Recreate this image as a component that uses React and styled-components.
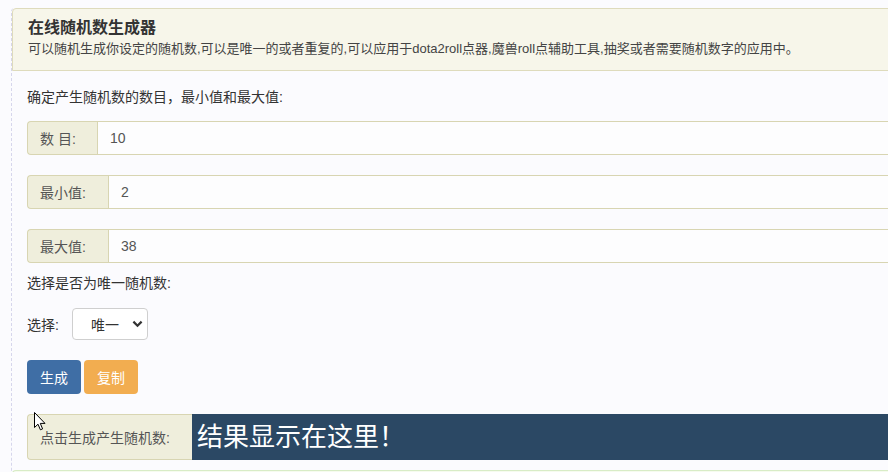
import React from "react";
import styled, { createGlobalStyle } from "styled-components";

const Global = createGlobalStyle`
  html, body {
    margin: 0;
    padding: 0;
    background: #fbfbfe;
    overflow: hidden;
  }
  body {
    font-family: "Liberation Sans", "Noto Sans CJK SC", sans-serif;
    color: #333;
  }
`;

const Page = styled.div`
  padding: 8px 0 0 11px;
  width: 1200px;
`;

const Panel = styled.section`
  border-left: 1px dashed #d6d6ec;
  border-top-left-radius: 4px;
`;

const Heading = styled.header`
  background: #f7f6ea;
  border: 1px solid #dedbbc;
  border-top-left-radius: 4px;
  padding: 7px 15px 7px 15px;
  height: 47px;
`;

const Title = styled.h3`
  margin: 0;
  font-size: 16px;
  font-weight: bold;
  line-height: 24px;
  color: #333;
`;

const Intro = styled.p`
  margin: 0;
  font-size: 13px;
  line-height: 18px;
  color: #444;
`;

const Body = styled.div`
  padding: 16px 0 0 15px;
`;

const Text = styled.p`
  margin: ${(p) => p.$m || "0"};
  font-size: 14px;
  line-height: 20px;
  color: #333;
`;

const Group = styled.div`
  display: flex;
  height: ${(p) => p.$h ?? 34}px;
  margin-bottom: ${(p) => p.$mb ?? 20}px;
  position: relative;
`;

const Addon = styled.span`
  display: flex;
  align-items: center;
  box-sizing: border-box;
  width: ${(p) => p.$w}px;
  padding-left: 12px;
  background: #efeedc;
  border: 1px solid #d8d5b2;
  border-right: none;
  border-radius: 4px 0 0 4px;
  font-size: 14px;
  color: #555;
  white-space: nowrap;
`;

const Field = styled.div`
  flex: 1;
  display: flex;
  align-items: center;
  padding-left: 12px;
  background: #fdfdfe;
  border: 1px solid #d8d5b2;
  font-size: 14px;
  color: #555;
`;

const Result = styled.div`
  flex: 1;
  display: flex;
  align-items: center;
  padding-left: 5px;
  background: #2b4864;
  color: #fff;
  font-size: 26px;
  line-height: 46px;
`;

const SelectRow = styled.div`
  display: flex;
  align-items: center;
  gap: 13px;
  margin-top: 15px;
  font-size: 14px;
  color: #333;
`;

const Select = styled.div`
  box-sizing: border-box;
  width: 76px;
  height: 32px;
  display: flex;
  align-items: center;
  justify-content: space-between;
  padding: 0 4px 0 18px;
  background: #fff;
  border: 1px solid #cfcfcf;
  border-radius: 4px;
  font-size: 14px;
  color: #333;
`;

const Buttons = styled.div`
  display: flex;
  gap: 3px;
  margin: 20px 0;
`;

const Button = styled.button`
  width: 54px;
  height: 34px;
  border: none;
  border-radius: 4px;
  background: ${(p) => (p.$warn ? "#f2ad50" : "#3f6ea5")};
  color: #fff;
  font-family: inherit;
  font-size: 14px;
  padding: 0;
`;

const NextPanel = styled.div`
  margin-top: 10px;
  height: 20px;
  background: #f6fbef;
  border-top: 1px solid #d8ecc6;
  border-left: 1px solid #d8ecc6;
  border-top-left-radius: 4px;
`;

const Pointer = styled.svg`
  position: absolute;
  left: 7px;
  top: -2px;
`;

const Chevron = () => (
  <svg width="11" height="8" viewBox="0 0 11 8">
    <path d="M1.4 1.6 L5.5 5.7 L9.6 1.6" fill="none" stroke="#333" strokeWidth="2.2" />
  </svg>
);

export default function App() {
  return (
    <>
      <Global />
      <Page>
        <Panel>
          <Heading>
            <Title>在线随机数生成器</Title>
            <Intro>
              可以随机生成你设定的随机数,可以是唯一的或者重复的,可以应用于dota2roll点器,魔兽roll点辅助工具,抽奖或者需要随机数字的应用中。
            </Intro>
          </Heading>
          <Body>
            <Text $m="0 0 14px">确定产生随机数的数目，最小值和最大值:</Text>
            <Group>
              <Addon $w={70}>数 目:</Addon>
              <Field>10</Field>
            </Group>
            <Group>
              <Addon $w={81}>最小值:</Addon>
              <Field>2</Field>
            </Group>
            <Group $mb={10}>
              <Addon $w={81}>最大值:</Addon>
              <Field>38</Field>
            </Group>
            <Text>选择是否为唯一随机数:</Text>
            <SelectRow>
              <span>选择:</span>
              <Select>
                <span>唯一</span>
                <Chevron />
              </Select>
            </SelectRow>
            <Buttons>
              <Button>生成</Button>
              <Button $warn>复制</Button>
            </Buttons>
            <Group $h={46} $mb={0}>
              <Addon $w={165}>点击生成产生随机数:</Addon>
              <Result>结果显示在这里！</Result>
              <Pointer width="12" height="19" viewBox="0 0 12 19">
                <path
                  d="M0.5 0.5 L0.5 15.5 L4 12.2 L6.4 17.8 L8.6 16.9 L6.3 11.4 L11 11.4 Z"
                  fill="#fff"
                  stroke="#000"
                  strokeWidth="1"
                  strokeLinejoin="round"
                />
              </Pointer>
            </Group>
          </Body>
          <NextPanel />
        </Panel>
      </Page>
    </>
  );
}
